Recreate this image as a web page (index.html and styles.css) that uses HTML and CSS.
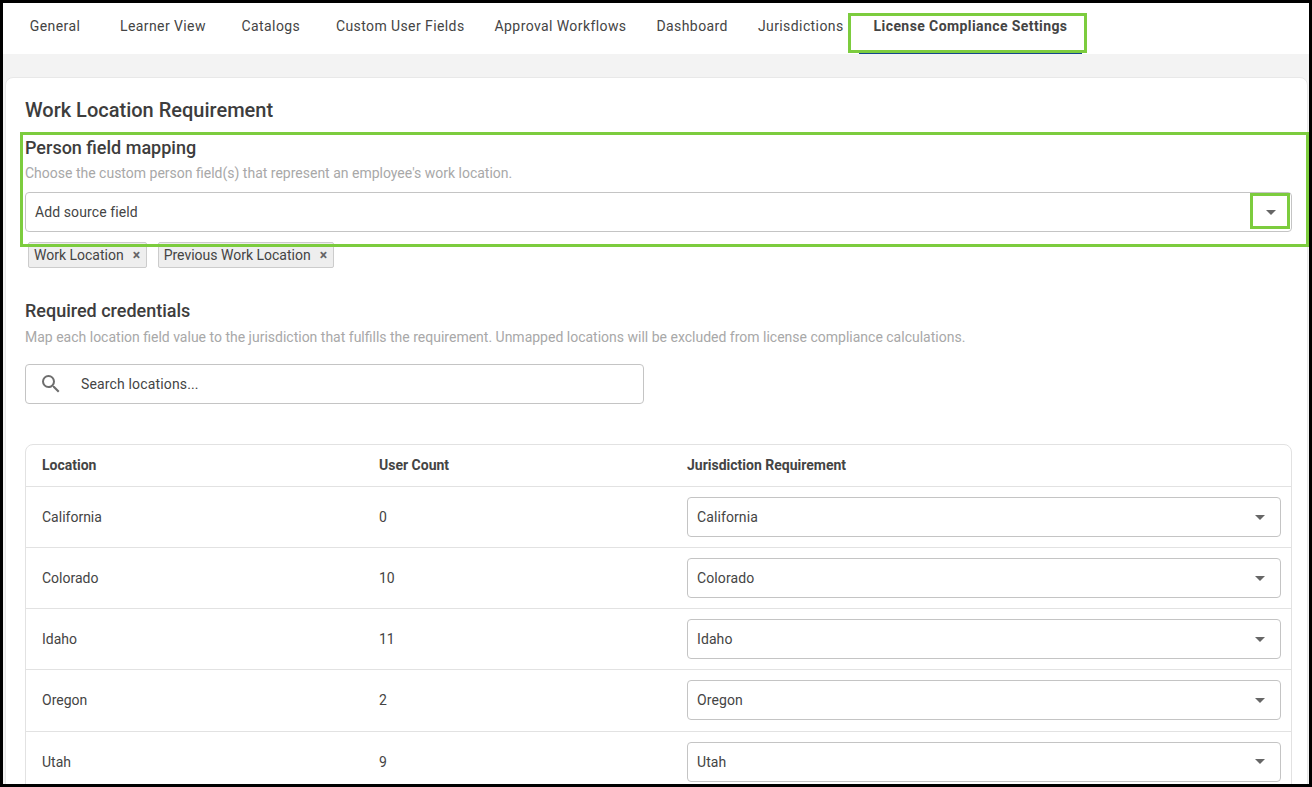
FILE: index.html
```html
<!DOCTYPE html>
<html lang="en">
<head>
    <meta charset="UTF-8">
    <meta name="viewport" content="width=device-width, initial-scale=1.0">
    <title>License Compliance Settings</title>
    <link rel="stylesheet" href="styles.css">
</head>
<body>
    <div class="frame">

        <!-- Tabs -->
        <nav class="tabs">
            <a class="tab">General</a>
            <a class="tab">Learner View</a>
            <a class="tab">Catalogs</a>
            <a class="tab">Custom User Fields</a>
            <a class="tab">Approval Workflows</a>
            <a class="tab">Dashboard</a>
            <a class="tab">Jurisdictions</a>
            <a class="tab active">License Compliance Settings</a>
        </nav>

        <main class="card">
            <h1>Work Location Requirement</h1>

            <h2>Person field mapping</h2>
            <p class="hint">Choose the custom person field(s) that represent an employee's work location.</p>
            <div class="select source-select">
                <span>Add source field</span>
                <span class="arrow"></span>
            </div>
            <div class="chips">
                <span class="chip">Work Location <span class="chip-x">&times;</span></span>
                <span class="chip">Previous Work Location <span class="chip-x">&times;</span></span>
            </div>

            <h2 class="credentials">Required credentials</h2>
            <p class="hint credentials-hint">Map each location field value to the jurisdiction that fulfills the requirement. Unmapped locations will be excluded from license compliance calculations.</p>
            <div class="search">
                <svg class="search-icon" viewBox="0 0 24 24" width="24" height="24">
                    <path fill="#6e6e6e" d="M15.5 14h-.79l-.28-.27A6.47 6.47 0 0 0 16 9.5 6.5 6.5 0 1 0 9.5 16c1.61 0 3.09-.59 4.23-1.57l.27.28v.79l5 4.99L20.49 19l-4.99-5zm-6 0C7.01 14 5 11.99 5 9.5S7.01 5 9.5 5 14 7.01 14 9.5 11.99 14 9.5 14z"/>
                </svg>
                <span>Search locations...</span>
            </div>

            <div class="table">
                <div class="row head">
                    <div>Location</div>
                    <div>User Count</div>
                    <div>Jurisdiction Requirement</div>
                </div>
                <div class="row">
                    <div>California</div>
                    <div>0</div>
                    <div class="select"><span>California</span><span class="arrow"></span></div>
                </div>
                <div class="row">
                    <div>Colorado</div>
                    <div>10</div>
                    <div class="select"><span>Colorado</span><span class="arrow"></span></div>
                </div>
                <div class="row">
                    <div>Idaho</div>
                    <div>11</div>
                    <div class="select"><span>Idaho</span><span class="arrow"></span></div>
                </div>
                <div class="row">
                    <div>Oregon</div>
                    <div>2</div>
                    <div class="select"><span>Oregon</span><span class="arrow"></span></div>
                </div>
                <div class="row">
                    <div>Utah</div>
                    <div>9</div>
                    <div class="select"><span>Utah</span><span class="arrow"></span></div>
                </div>
            </div>
        </main>

        <!-- Green callouts drawn over the page -->
        <div class="callout callout-tab"></div>
        <div class="callout callout-mapping"></div>
        <div class="callout callout-arrow"></div>
    </div>
</body>
</html>
```

FILE: styles.css
```css
/* General Styling */
* {
    box-sizing: border-box;
}

html, body {
    margin: 0;
    padding: 0;
    height: 100%;
    overflow: hidden;
}

body {
    font-family: Roboto, "Liberation Sans", sans-serif;
    font-size: 14px;
    color: #444;
}

.frame {
    position: relative;
    width: 1312px;
    height: 787px;
    border: 3px solid #000;
    background: #f3f3f3;
    overflow: hidden;
}

/* Tabs */
.tabs {
    display: flex;
    height: 51px;
    padding-left: 2px;
    background: #fff;
}

.tab {
    min-width: 100px;
    height: 51px;
    padding: 14px 15px 0;
    text-align: center;
    line-height: 18px;
    letter-spacing: 0.41px;
    white-space: nowrap;
}

.tab.active {
    font-weight: 700;
    border-bottom: 2px solid #14468c;
}

/* Card */
.card {
    margin: 23px 1px 0 2px;
    padding: 19px 15px 0 19px;
    height: 760px;
    background: #fff;
    border: 1px solid #e8e8e8;
    border-radius: 8px;
}

h1 {
    margin: 0;
    font-size: 20px;
    line-height: 26px;
    font-weight: 500;
    color: #3d3d3d;
}

h2 {
    margin: 13px 0 0;
    font-size: 18px;
    line-height: 24px;
    font-weight: 500;
    color: #3d3d3d;
}

.hint {
    margin: 3px 0 0;
    line-height: 20px;
    color: #a8a8a8;
}

/* Select */
.select {
    display: flex;
    justify-content: space-between;
    align-items: center;
    height: 40px;
    padding: 0 15px 0 9px;
    border: 1px solid #c4c4c4;
    border-radius: 4px;
    background: #fff;
    letter-spacing: 0.1px;
}

.source-select {
    margin-top: 9px;
}

.arrow {
    width: 0;
    height: 0;
    border-left: 5px solid transparent;
    border-right: 5px solid transparent;
    border-top: 5px solid #666;
}

/* Chips */
.chips {
    display: flex;
    gap: 11px;
    margin: 10px 0 0 3px;
}

.chip {
    display: flex;
    align-items: center;
    justify-content: space-between;
    gap: 9px;
    height: 26px;
    padding: 0 5.5px 0 5px;
    background: #eee;
    border: 1px solid #ccc;
    border-radius: 2px;
}

.chip-x {
    font-weight: 700;
    color: #666;
}

.credentials {
    margin-top: 31px;
}

.credentials-hint {
    margin-top: 4px;
}

/* Search */
.search {
    display: flex;
    align-items: center;
    gap: 18px;
    width: 619px;
    height: 40px;
    margin-top: 17px;
    padding: 0 0 1px 13px;
    border: 1px solid #c4c4c4;
    border-radius: 4px;
    letter-spacing: 0.15px;
}

/* Table */
.table {
    margin-top: 40px;
    border: 1px solid #e2e2e2;
    border-radius: 8px;
}

.row {
    display: grid;
    grid-template-columns: 337px 308px 1fr;
    align-items: center;
    height: 61.15px;
    padding-right: 10px;
    border-bottom: 1px solid #e2e2e2;
}

.row > div:not(.select) {
    padding-left: 16px;
}

.row.head {
    height: 42px;
    padding-bottom: 2px;
    font-weight: 700;
}

.row .select {
    margin-left: 16px;
}

/* Callouts */
.callout {
    position: absolute;
    border: 3px solid #7ccc3e;
    pointer-events: none;
}

.callout-tab {
    left: 845px;
    top: 10px;
    width: 239px;
    height: 40px;
}

.callout-mapping {
    left: 17px;
    top: 129px;
    width: 1289px;
    height: 115px;
}

.callout-arrow {
    left: 1247px;
    top: 190px;
    width: 40px;
    height: 36px;
}
```
